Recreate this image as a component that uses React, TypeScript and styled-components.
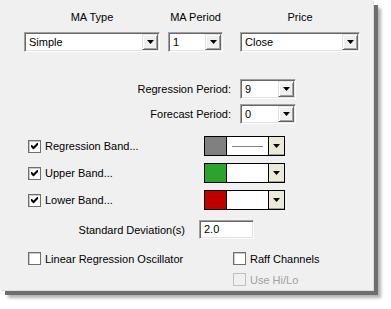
import styled, { createGlobalStyle } from "styled-components";

const GlobalStyle = createGlobalStyle`
  html, body {
    margin: 0;
    padding: 0;
    background: #ffffff;
  }
  body {
    font-family: "Liberation Sans", Arial, sans-serif;
    font-size: 11px;
    color: #000;
  }
`;

const Frame = styled.div`
  width: 391px;
  height: 309px;
`;

const Panel = styled.div`
  box-sizing: border-box;
  width: 373px;
  height: 290px;
  background: #f0f0f0;
  padding-top: 10px;
  display: flex;
  flex-direction: column;
  box-shadow: 1px 1px 0 #dcdcdc, 5px 5px 0 #6e6e6e, 8px 8px 3px rgba(0, 0, 0, 0.3);
`;

const HeaderRow = styled.div`
  display: flex;
  padding-left: 24px;
`;

const HeaderCol = styled.div<{ $w: number; $gap: number }>`
  display: flex;
  flex-direction: column;
  align-items: center;
  width: ${({ $w }) => $w}px;
  margin-right: ${({ $gap }) => $gap}px;
`;

const HeaderLabel = styled.div`
  line-height: 14px;
  height: 14px;
  margin-bottom: 8px;
  white-space: nowrap;
`;

const Sunken = styled.div<{ $w: number; $h?: number }>`
  box-sizing: border-box;
  width: ${({ $w }) => $w}px;
  height: ${({ $h }) => $h ?? 20}px;
  background: #fff;
  border-style: solid;
  border-width: 1px;
  border-color: #a0a0a0 #ffffff #ffffff #a0a0a0;
  box-shadow: inset 1px 1px 0 #696969, inset -1px -1px 0 #e3e3e3;
  display: flex;
  align-items: center;
  padding: 1px;
`;

const SelectText = styled.span`
  flex: 1;
  padding-left: 3px;
  line-height: 16px;
  white-space: nowrap;
  overflow: hidden;
`;

const DropButton = styled.span`
  box-sizing: border-box;
  width: 16px;
  height: 16px;
  background: #f0f0f0;
  border-style: solid;
  border-width: 1px;
  border-color: #e3e3e3 #696969 #696969 #e3e3e3;
  box-shadow: inset 1px 1px 0 #ffffff, inset -1px -1px 0 #a0a0a0;
  display: flex;
  align-items: center;
  justify-content: center;
`;

const Arrow = () => (
  <svg width="7" height="4" viewBox="0 0 7 4">
    <path d="M0 0h7L3.5 4z" fill="#000" />
  </svg>
);

const Select = ({ value, w }: { value: string; w: number }) => (
  <Sunken $w={w}>
    <SelectText>{value}</SelectText>
    <DropButton>
      <Arrow />
    </DropButton>
  </Sunken>
);

const PeriodBlock = styled.div`
  display: flex;
  flex-direction: column;
  gap: 5px;
  margin-top: 27px;
`;

const FieldRow = styled.div<{ $labelW: number; $gap: number }>`
  display: grid;
  grid-template-columns: ${({ $labelW }) => $labelW}px auto;
  column-gap: ${({ $gap }) => $gap}px;
  align-items: center;
  height: 20px;
`;

const RightLabel = styled.span`
  text-align: right;
  white-space: nowrap;
`;

const BandBlock = styled.div`
  display: flex;
  flex-direction: column;
  gap: 7px;
  margin-top: 12px;
`;

const BandRow = styled.div`
  display: grid;
  grid-template-columns: 204px auto;
  align-items: center;
  height: 20px;
`;

const CheckLine = styled.label<{ $disabled?: boolean }>`
  display: flex;
  align-items: center;
  gap: 4px;
  white-space: nowrap;
  color: ${({ $disabled }) => ($disabled ? "#a0a0a0" : "#000")};
`;

const BandCheck = styled(CheckLine)`
  padding-left: 28px;
`;

const Box = styled.span<{ $disabled?: boolean }>`
  box-sizing: border-box;
  width: 13px;
  height: 13px;
  background: ${({ $disabled }) => ($disabled ? "#f0f0f0" : "#fff")};
  border: 1px solid ${({ $disabled }) => ($disabled ? "#c0c0c0" : "#6e6e6e")};
  box-shadow: ${({ $disabled }) => ($disabled ? "none" : "inset 1px 1px 0 #c8c8c8")};
  display: flex;
  align-items: center;
  justify-content: center;
`;

const CheckBox = ({ checked, disabled }: { checked?: boolean; disabled?: boolean }) => (
  <Box $disabled={disabled}>
    {checked && (
      <svg width="7" height="7" viewBox="0 0 7 7">
        <path d="M0 2h1l1.5 1.5L6 0h1v2L2.5 6.5 0 4z" fill="#000" />
      </svg>
    )}
  </Box>
);

const ColorCombo = styled.div`
  box-sizing: border-box;
  width: 81px;
  height: 20px;
  border: 1px solid #000;
  display: grid;
  grid-template-columns: 22px 1fr 15px;
  background: #fff;
`;

const Swatch = styled.span<{ $color: string }>`
  background: ${({ $color }) => $color};
  border-right: 1px solid #000;
`;

const LineArea = styled.span`
  border-right: 1px solid #000;
  display: flex;
  align-items: center;
  justify-content: center;
`;

const LineSample = styled.span`
  width: 31px;
  height: 1px;
  background: #808080;
`;

const ComboButton = styled.span`
  background: #ece9d8;
  border-bottom: 1px solid #a0a0a0;
  display: flex;
  align-items: center;
  justify-content: center;
`;

const StdRow = styled(FieldRow)`
  margin-top: 10px;
  height: 19px;
`;

const InputText = styled.span`
  padding-left: 3px;
  line-height: 15px;
`;

const OptionsGrid = styled.div`
  display: grid;
  grid-template-columns: 205px auto;
  grid-auto-rows: 13px;
  row-gap: 8px;
  margin-top: 13px;
  padding-left: 28px;
`;

const bands = [
  { label: "Regression Band...", color: "#808080", line: true },
  { label: "Upper Band...", color: "#2ca42c", line: false },
  { label: "Lower Band...", color: "#c00000", line: false },
];

export default function App() {
  return (
    <Frame>
      <GlobalStyle />
      <Panel>
        <HeaderRow>
          <HeaderCol $w={136} $gap={8}>
            <HeaderLabel>MA Type</HeaderLabel>
            <Select value="Simple" w={136} />
          </HeaderCol>
          <HeaderCol $w={55} $gap={17}>
            <HeaderLabel>MA Period</HeaderLabel>
            <Select value="1" w={55} />
          </HeaderCol>
          <HeaderCol $w={120} $gap={0}>
            <HeaderLabel>Price</HeaderLabel>
            <Select value="Close" w={120} />
          </HeaderCol>
        </HeaderRow>

        <PeriodBlock>
          <FieldRow $labelW={231} $gap={9}>
            <RightLabel>Regression Period:</RightLabel>
            <Select value="9" w={56} />
          </FieldRow>
          <FieldRow $labelW={231} $gap={9}>
            <RightLabel>Forecast Period:</RightLabel>
            <Select value="0" w={56} />
          </FieldRow>
        </PeriodBlock>

        <BandBlock>
          {bands.map((b) => (
            <BandRow key={b.label}>
              <BandCheck>
                <CheckBox checked />
                {b.label}
              </BandCheck>
              <ColorCombo>
                <Swatch $color={b.color} />
                <LineArea>{b.line && <LineSample />}</LineArea>
                <ComboButton>
                  <Arrow />
                </ComboButton>
              </ColorCombo>
            </BandRow>
          ))}
        </BandBlock>

        <StdRow $labelW={185} $gap={14}>
          <RightLabel>Standard Deviation(s)</RightLabel>
          <Sunken $w={55} $h={19}>
            <InputText>2.0</InputText>
          </Sunken>
        </StdRow>

        <OptionsGrid>
          <CheckLine>
            <CheckBox />
            Linear Regression Oscillator
          </CheckLine>
          <CheckLine>
            <CheckBox />
            Raff Channels
          </CheckLine>
          <span />
          <CheckLine $disabled>
            <CheckBox disabled />
            Use Hi/Lo
          </CheckLine>
        </OptionsGrid>
      </Panel>
    </Frame>
  );
}
